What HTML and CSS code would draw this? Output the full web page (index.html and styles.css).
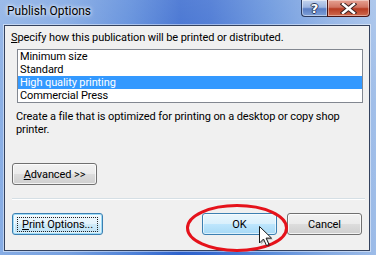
FILE: index.html
```html
<!DOCTYPE html>
<html>
<head>
<meta charset="utf-8">
<link rel="stylesheet" href="styles.css">
</head>
<body>
<div class="screen">
  <div class="titlebar">
    <span class="title">Publish Options</span>
    <div class="caption-btns">
      <div class="cbtn help"><span>?</span></div>
      <div class="cbtn close">
        <svg width="17" height="11" viewBox="0 0 17 11">
          <path d="M3 1 L14 10 M14 1 L3 10" stroke="#3a2222" stroke-width="4.4" stroke-linecap="square"/>
          <path d="M3 1 L14 10 M14 1 L3 10" stroke="#ffffff" stroke-width="2.4" stroke-linecap="square"/>
        </svg>
      </div>
    </div>
  </div>
  <div class="client">
    <div class="label"><u>S</u>pecify how this publication will be printed or distributed.</div>
    <ul class="listbox">
      <li>Minimum size</li>
      <li>Standard</li>
      <li class="selected">High quality printing</li>
      <li>Commercial Press</li>
    </ul>
    <p class="desc">Create a file that is optimized for printing on a desktop or copy shop<br>printer.</p>
    <div class="adv-row"><button class="btn adv"><u>A</u>dvanced &gt;&gt;</button></div>
    <div class="sep"></div>
    <div class="footer">
      <button class="btn focus wide"><span class="focusrect"><u>P</u>rint Options...</span></button>
      <div class="spacer"></div>
      <button class="btn hover">OK</button>
      <button class="btn">Cancel</button>
    </div>
  </div>
  <svg class="annot" width="104" height="50" viewBox="0 0 104 50">
    <ellipse cx="52" cy="25" rx="49.5" ry="22.5" fill="none" stroke="#e5121b" stroke-width="3"/>
  </svg>
  <svg class="cursor" width="16" height="22" viewBox="0 0 16 22">
    <path d="M2 2 L2 18.5 L6 14.5 L9 21 L11.5 20 L8.6 13.6 L14 13.6 Z" fill="rgba(0,0,0,0.25)"/>
    <path d="M0.5 0.5 L0.5 17 L4.5 13 L7.5 19.5 L10 18.5 L7.1 12.1 L12.5 12.1 Z" fill="#ffffff" stroke="#1a1a1a" stroke-width="1" stroke-linejoin="miter"/>
  </svg>
</div>
</body>
</html>
```
FILE: styles.css
```css
* { box-sizing: border-box; }
html, body { margin: 0; padding: 0; }
body { width: 376px; height: 255px; overflow: hidden; }

.screen {
  position: relative;
  width: 376px;
  height: 255px;
  overflow: hidden;
  background:
    linear-gradient(180deg, rgba(255,255,255,0.18) 0%, rgba(255,255,255,0.05) 40%, rgba(0,0,0,0) 100%),
    linear-gradient(90deg, #86ace4 0%, #76a0e0 18%, #4f82d8 35%, #2e62cc 48%, #3669cf 56%, #5b8cda 72%, #86abe3 88%, #9dbce8 100%);
  font-family: Roboto, "Open Sans", sans-serif;
  font-size: 11px;
  letter-spacing: -0.1px;
  color: #000;
}

.titlebar {
  height: 25px;
  display: flex;
  align-items: flex-start;
}
.title {
  padding-left: 7px;
  line-height: 23px;
  font-size: 12px;
  letter-spacing: 0;
  color: #000;
  text-shadow: 0 0 5px rgba(255,255,255,0.9), 0 0 3px rgba(255,255,255,0.8);
}
.caption-btns {
  margin-left: auto;
  margin-right: 6px;
  display: flex;
  height: 17px;
}
.cbtn {
  height: 17px;
  display: flex;
  align-items: center;
  justify-content: center;
  border: 1px solid #2b3b5e;
  border-top: none;
}
.help {
  width: 26px;
  border-radius: 0 0 0 4px;
  border-right: none;
  background: linear-gradient(180deg, #c4d4ee 0%, #9cb4e0 45%, #5a7ec4 55%, #7ea0d8 100%);
  box-shadow: inset 0 0 0 1px rgba(255,255,255,0.45);
}
.help span {
  font-family: "DejaVu Sans", sans-serif;
  font-weight: bold;
  font-size: 13px;
  line-height: 13px;
  color: #fff;
  text-shadow: -1px 0 #2c3a5a, 1px 0 #2c3a5a, 0 -1px #2c3a5a, 0 1px #2c3a5a;
}
.close {
  width: 43px;
  border-radius: 0 0 4px 0;
  border-color: #4a1414;
  background: linear-gradient(180deg, #e6a293 0%, #d17462 45%, #b73b22 55%, #cf6a4f 100%);
  box-shadow: inset 0 0 0 1px rgba(255,255,255,0.4);
}

.client {
  margin-left: 4px;
  width: 366px;
  height: 226px;
  background: #f0f0f0;
  border: 1px solid #34425e;
  box-shadow: 0 0 0 1px rgba(255,255,255,0.45);
  padding: 5px 7px 0 7px;
  display: flex;
  flex-direction: column;
}

.label {
  margin-left: -1px;
  line-height: 14px;
  height: 14px;
  white-space: nowrap;
}

.listbox {
  list-style: none;
  margin: 4px 0 0 5px;
  padding: 0;
  width: 346px;
  height: 54px;
  background: #fff;
  border: 1px solid #828790;
}
.listbox li {
  height: 13px;
  line-height: 13px;
  padding-left: 2px;
  white-space: nowrap;
}
.listbox li.selected {
  background: #3399ff;
  color: #fff;
}

.desc {
  margin: 7px 0 0 4px;
  line-height: 13px;
  white-space: nowrap;
}

.adv-row {
  margin-top: 27px;
  display: flex;
}

.btn {
  font-family: inherit;
  font-size: 11px;
  letter-spacing: -0.1px;
  color: #000;
  height: 22px;
  width: 75px;
  padding: 0;
  border: 1px solid #707070;
  border-radius: 3px;
  background: linear-gradient(180deg, #f2f2f2 0%, #ebebeb 49%, #dddddd 50%, #cfcfcf 100%);
  box-shadow: inset 0 0 0 1px rgba(255,255,255,0.75);
  display: flex;
  align-items: center;
  justify-content: center;
}
.adv { width: 85px; }
.wide { width: 91px; }

.sep {
  margin-top: 13px;
  width: 353px;
  background: #d5dfe5;
  border-bottom: 1px solid #ffffff;
  height: 2px;
}

.footer {
  margin-top: 13px;
  display: flex;
  align-items: center;
  gap: 10px;
}
.spacer { flex: 1; }

.focus {
  border-color: #3c7fb1;
  background: linear-gradient(180deg, #eef8fd 0%, #e3f3fc 49%, #d0ebf9 50%, #bfe2f5 100%);
  box-shadow: inset 0 0 0 1px #9edcf7, inset 0 0 0 2px rgba(255,255,255,0.5);
}
.focusrect {
  border: 1px dotted #222;
  padding: 0 4px;
  line-height: 13px;
}
.hover {
  border-color: #3c7fb1;
  background: linear-gradient(180deg, #eaf6fd 0%, #d9f0fc 49%, #bee6fd 50%, #a7d9f5 100%);
  box-shadow: inset 0 0 0 1px rgba(255,255,255,0.6);
}

.annot {
  position: absolute;
  left: 185px;
  top: 203px;
}
.cursor {
  position: absolute;
  left: 259px;
  top: 226px;
}
```
